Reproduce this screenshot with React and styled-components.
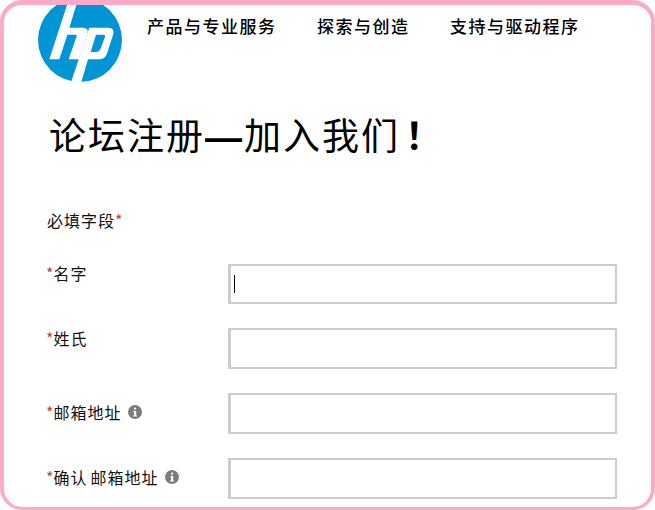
import React from "react";
import styled, { createGlobalStyle } from "styled-components";

const Global = createGlobalStyle`
  html, body { margin: 0; padding: 0; background: #fff; }
  body { font-family: "Noto Sans CJK SC", "Liberation Sans", sans-serif; color: #111; }
`;

const Frame = styled.div`
  box-sizing: border-box;
  width: 655px;
  height: 510px;
  border: solid #fdaac9;
  border-width: 5px 4px 3px 4px;
  border-radius: 22px;
  overflow: hidden;
  background: #fff;
`;
const Header = styled.header`
  display: flex;
  align-items: flex-start;
  height: 78px;
  padding-left: 28px;
`;
const Logo = styled.svg`
  flex: none;
  width: 95px;
  height: 83px;
  display: block;
`;
const Nav = styled.nav`
  display: flex;
  gap: 40.5px;
  margin-left: 20px;
  padding-top: 10px;
`;
const NavLink = styled.a`
  font-size: 17px;
  line-height: 22px;
  letter-spacing: 1.5px;
  font-weight: 500;
  color: #000;
  white-space: nowrap;
`;
const Main = styled.main`
  padding: 31px 34px 0 42px;
`;
const Title = styled.h1`
  height: 40px;
  margin: 0 0 0 3px;
  font-size: 37px;
  line-height: 40px;
  letter-spacing: 2px;
  font-weight: 400;
  color: #000;
  white-space: nowrap;
`;
const Dash = styled.span`
  font-family: "Liberation Sans", sans-serif;
  font-weight: 700;
`;
const Bang = styled.span`
  margin-left: 5px;
  font-weight: 700;
`;
const Note = styled.p`
  margin: 56px 0 34px 1px;
  font-size: 16px;
  line-height: 20px;
  letter-spacing: 1px;
`;
const Star = styled.span`
  color: #c8402a;
  letter-spacing: 0;
`;
const Form = styled.form`
  display: grid;
  grid-template-columns: 182px 389px;
  row-gap: 24px;
`;
const Label = styled.label`
  display: flex;
  align-items: center;
  height: 18px;
  padding-top: ${(p) => p.$drop}px;
  font-size: 16px;
  line-height: 18px;
  letter-spacing: 1px;
  word-spacing: -1.5px;
  white-space: pre;
`;
const Info = styled.svg`
  width: 14px;
  height: 14px;
  margin-left: 6px;
  flex: none;
`;
const Field = styled.div`
  box-sizing: border-box;
  display: flex;
  align-items: center;
  height: ${(p) => p.$h}px;
  border: solid #cccccc;
  border-width: 2px 2px 2px 3px;
  padding-left: 3px;
  background: #fff;
`;
const Caret = styled.span`
  flex: none;
  width: 1px;
  height: 18px;
  background: #000;
`;

const InfoIcon = () => (
  <Info viewBox="0 0 14 14">
    <circle cx="7" cy="7" r="7" fill="#7c7c7c" />
    <rect x="6" y="2.6" width="2.2" height="2.2" rx="1" fill="#fff" />
    <path d="M5.4 6h2.8v4.4h.9v1.1H5.2v-1.1h.9V7.1h-.7z" fill="#fff" />
  </Info>
);

const rows = [
  { label: "名字", drop: 0, h: 40, caret: true },
  { label: "姓氏", drop: 1, h: 41 },
  { label: "邮箱地址", drop: 10, h: 41, info: true },
  { label: "确认 邮箱地址", drop: 10, h: 41, info: true },
];

export default function App() {
  return (
    <>
      <Global />
      <Frame>
        <Header>
          <Logo viewBox="0 15 285 249">
            <circle cx="144" cy="120" r="126" fill="#0096d6" />
            <path
              fill="#fff"
              d="M105 15H133L112 83H152Q172 83 166 102L141 178H110L134 108Q135 104 130 104H106L82 178H52Z"
            />
            <path
              fill="#fff"
              fillRule="evenodd"
              d="M172 83H228Q250 83 243 105L226 158Q220 178 200 178H168L147 250H116ZM192 104L176 156H194Q202 156 205 148L219 110Q221 104 215 104Z"
            />
          </Logo>
          <Nav>
            <NavLink>产品与专业服务</NavLink>
            <NavLink>探索与创造</NavLink>
            <NavLink>支持与驱动程序</NavLink>
          </Nav>
        </Header>
        <Main>
          <Title>
            论坛注册<Dash>—</Dash>加入我们<Bang>！</Bang>
          </Title>
          <Note>
            必填字段<Star>*</Star>
          </Note>
          <Form>
            {rows.map((r) => (
              <React.Fragment key={r.label}>
                <Label $drop={r.drop}>
                  <Star>*</Star>
                  {r.label}
                  {r.info && <InfoIcon />}
                </Label>
                <Field $h={r.h}>{r.caret && <Caret />}</Field>
              </React.Fragment>
            ))}
          </Form>
        </Main>
      </Frame>
    </>
  );
}
